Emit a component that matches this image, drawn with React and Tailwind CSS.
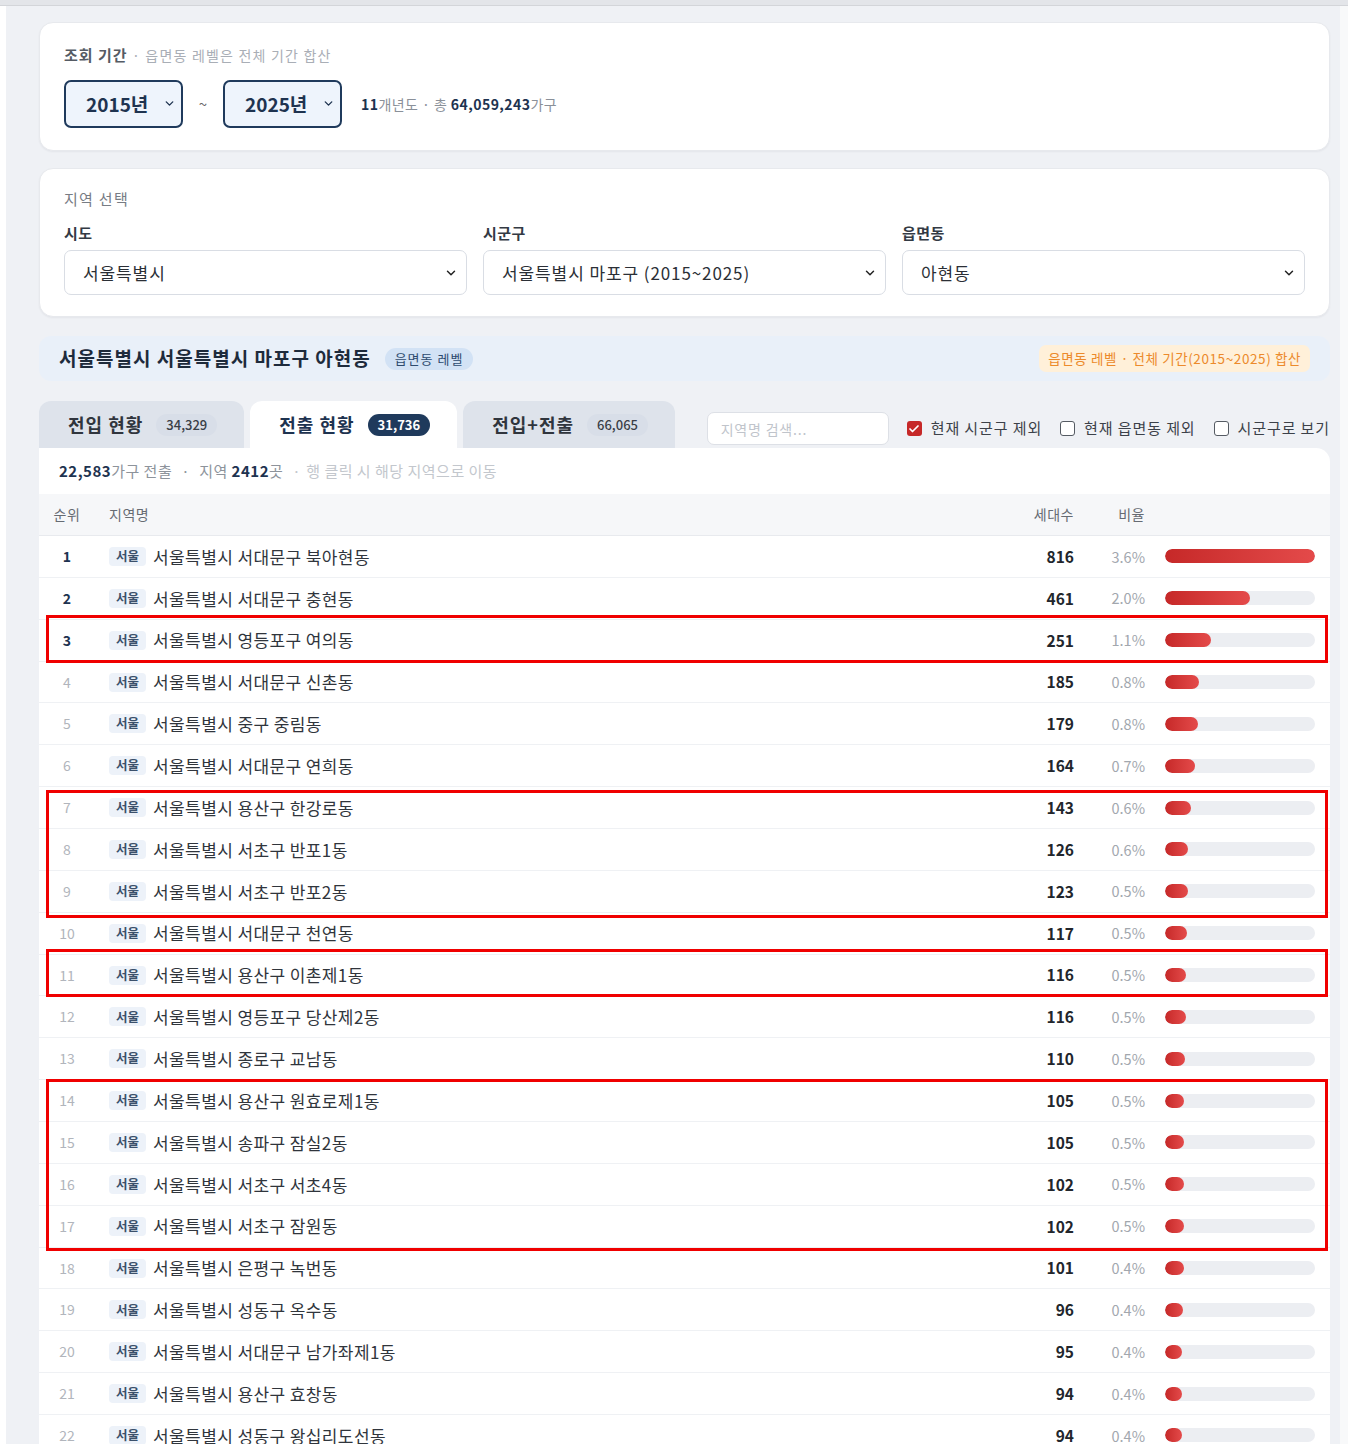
import React from 'react';
import { ChevronDown, Check } from 'lucide-react';

const rows = [
  { name: '서울특별시 서대문구 북아현동', count: 816, pct: '3.6%' },
  { name: '서울특별시 서대문구 충현동', count: 461, pct: '2.0%' },
  { name: '서울특별시 영등포구 여의동', count: 251, pct: '1.1%' },
  { name: '서울특별시 서대문구 신촌동', count: 185, pct: '0.8%' },
  { name: '서울특별시 중구 중림동', count: 179, pct: '0.8%' },
  { name: '서울특별시 서대문구 연희동', count: 164, pct: '0.7%' },
  { name: '서울특별시 용산구 한강로동', count: 143, pct: '0.6%' },
  { name: '서울특별시 서초구 반포1동', count: 126, pct: '0.6%' },
  { name: '서울특별시 서초구 반포2동', count: 123, pct: '0.5%' },
  { name: '서울특별시 서대문구 천연동', count: 117, pct: '0.5%' },
  { name: '서울특별시 용산구 이촌제1동', count: 116, pct: '0.5%' },
  { name: '서울특별시 영등포구 당산제2동', count: 116, pct: '0.5%' },
  { name: '서울특별시 종로구 교남동', count: 110, pct: '0.5%' },
  { name: '서울특별시 용산구 원효로제1동', count: 105, pct: '0.5%' },
  { name: '서울특별시 송파구 잠실2동', count: 105, pct: '0.5%' },
  { name: '서울특별시 서초구 서초4동', count: 102, pct: '0.5%' },
  { name: '서울특별시 서초구 잠원동', count: 102, pct: '0.5%' },
  { name: '서울특별시 은평구 녹번동', count: 101, pct: '0.4%' },
  { name: '서울특별시 성동구 옥수동', count: 96, pct: '0.4%' },
  { name: '서울특별시 서대문구 남가좌제1동', count: 95, pct: '0.4%' },
  { name: '서울특별시 용산구 효창동', count: 94, pct: '0.4%' },
  { name: '서울특별시 성동구 왕십리도선동', count: 94, pct: '0.4%' },
];

// highlighted groups (annotation boxes), in px relative to the rows list
const marks = [
  { top: 79, height: 48 },
  { top: 254, height: 128 },
  { top: 413, height: 48 },
  { top: 543, height: 172 },
];

function YearSelect({ value }) {
  return (
    <div className="relative">
      <select
        defaultValue={value}
        className="appearance-none w-[119px] h-[48px] border-2 border-[#1f3a5c] rounded-[7px] bg-[#eef4fc] pl-[20px] text-[19px] font-bold text-[#1e3350] focus:outline-none"
      >
        <option>{value}</option>
      </select>
      <ChevronDown className="absolute right-[7px] top-[17px] w-[13px] h-[13px] text-[#1e3350] pointer-events-none" strokeWidth={2.5} />
    </div>
  );
}

function RegionSelect({ label, value }) {
  return (
    <div>
      <div className="text-[15px] font-bold text-[#333a44] leading-[20px] tracking-[0.5px]">{label}</div>
      <div className="relative mt-[7px]">
        <select
          defaultValue={value}
          className="appearance-none w-full h-[45px] border border-[#d9dde4] rounded-[7px] bg-white pl-[18px] text-[17px] tracking-[0.9px] text-[#2b2f36] focus:outline-none"
        >
          <option>{value}</option>
        </select>
        <ChevronDown className="absolute right-[9px] top-[16px] w-[14px] h-[14px] text-[#222] pointer-events-none" strokeWidth={2.5} />
      </div>
    </div>
  );
}

function Tab({ label, count, active }) {
  return (
    <div
      className={`h-[47px] flex items-center gap-[13px] pl-[29px] pr-[27px] rounded-t-[12px] ${
        active ? 'bg-white' : 'bg-[#dee3eb]'
      }`}
    >
      <span className={`text-[18px] tracking-[1px] font-bold ${active ? 'text-[#1e3350]' : 'text-[#30353d]'}`}>{label}</span>
      <span
        className={`h-[22px] px-[10px] rounded-full flex items-center text-[13px] ${
          active ? 'bg-[#1f3a5c] text-white font-bold' : 'bg-[#d8dee8] text-[#3a3f47] font-medium'
        }`}
      >
        {count}
      </span>
    </div>
  );
}

function CheckItem({ label, checked }) {
  return (
    <label className="flex items-center gap-[9px] cursor-pointer">
      {checked ? (
        <span className="w-[15px] h-[15px] rounded-[3px] bg-[#c62828] flex items-center justify-center">
          <Check className="w-[12px] h-[12px] text-white" strokeWidth={3.5} />
        </span>
      ) : (
        <span className="w-[15px] h-[15px] rounded-[3px] border-[1.5px] border-[#555b63] bg-white" />
      )}
      <span className="text-[15px] tracking-[0.9px] text-[#3c4149]">{label}</span>
    </label>
  );
}

export default function App() {
  const max = rows[0].count;

  return (
    <div className="min-h-[1444px] bg-white font-['Noto_Sans_CJK_KR',sans-serif] text-[#333]">
      <div className="h-[6px] bg-[#e3e5e9] border-b border-[#d3d5d9]" />
      <div className="flex">
        <div className="w-[6px] shrink-0 bg-white" />
        <main className="flex-1 bg-[#eff1f5] pl-[33px] pr-[10px] pt-[16px] min-h-[1438px]">
          {/* Period */}
          <section className="bg-white rounded-[14px] border border-[#e7e9ed] shadow-[0_1px_2px_rgba(16,24,40,0.05)] px-[24px] pt-[21px] pb-[22px]">
            <div className="leading-[20px]">
              <span className="text-[15px] tracking-[1px] font-bold text-[#555b64]">조회 기간</span>
              <span className="text-[14px] tracking-[1.2px] text-[#a9aeb6]"> · 읍면동 레벨은 전체 기간 합산</span>
            </div>
            <div className="mt-[15px] flex items-center">
              <YearSelect value="2015년" />
              <span className="w-[40px] text-center text-[15px] text-[#666]">~</span>
              <YearSelect value="2025년" />
              <span className="ml-[19px] text-[14px] tracking-[0.45px] text-[#8a9099]">
                <b className="text-[#1e3350]">11</b>개년도 · 총 <b className="text-[#1e3350]">64,059,243</b>가구
              </span>
            </div>
          </section>

          {/* Region */}
          <section className="mt-[17px] bg-white rounded-[14px] border border-[#e7e9ed] shadow-[0_1px_2px_rgba(16,24,40,0.05)] px-[24px] pt-[20px] pb-[21px]">
            <div className="text-[15px] tracking-[1.3px] text-[#777c84] leading-[20px]">지역 선택</div>
            <div className="mt-[14px] grid grid-cols-3 gap-[16px]">
              <RegionSelect label="시도" value="서울특별시" />
              <RegionSelect label="시군구" value="서울특별시 마포구 (2015~2025)" />
              <RegionSelect label="읍면동" value="아현동" />
            </div>
          </section>

          {/* Title band */}
          <div className="mt-[19px] h-[45px] rounded-[12px] bg-[#e9f0f9] px-[20px] flex items-center justify-between">
            <div className="flex items-center gap-[14px]">
              <h2 className="text-[19px] tracking-[1px] font-bold text-[#1e2b3c]">서울특별시 서울특별시 마포구 아현동</h2>
              <span className="h-[22px] px-[10px] rounded-full bg-[#d2e2f5] text-[13px] tracking-[1px] text-[#2d4a6e] flex items-center">읍면동 레벨</span>
            </div>
            <span className="h-[27px] px-[9px] rounded-[7px] bg-[#fff0d9] text-[13.5px] tracking-[0.6px] text-[#ec8a2b] flex items-center">
              읍면동 레벨 · 전체 기간(2015~2025) 합산
            </span>
          </div>

          {/* Tabs + controls */}
          <div className="mt-[20px] flex items-end justify-between">
            <div className="flex items-end gap-[6px]">
              <Tab label="전입 현황" count="34,329" />
              <Tab label="전출 현황" count="31,736" active />
              <Tab label="전입+전출" count="66,065" />
            </div>
            <div className="flex items-center gap-[18px] pb-[3px]">
              <input
                type="text"
                placeholder="지역명 검색..."
                className="w-[182px] h-[33px] rounded-[7px] border border-[#dde0e6] bg-white px-[13px] text-[14px] tracking-[0.8px] placeholder:text-[#c0c4cb] focus:outline-none"
              />
              <CheckItem label="현재 시군구 제외" checked />
              <CheckItem label="현재 읍면동 제외" />
              <CheckItem label="시군구로 보기" />
            </div>
          </div>

          {/* Table */}
          <section className="bg-white rounded-tr-[14px]">
            <div className="h-[46px] flex items-center pl-[20px] text-[15px] tracking-[0.5px] text-[#8d939b]">
              <b className="text-[#1e3350]">22,583</b>가구 전출
              <span className="mx-[9px]">·</span>
              지역&nbsp;<b className="text-[#1e3350]">2412</b>곳
              <span className="ml-[9px] mr-[5px] text-[#c3c7cd]">·</span>
              <span className="text-[#c3c7cd]">행 클릭 시 해당 지역으로 이동</span>
            </div>
            <div className="h-[42px] flex items-center bg-[#f6f7f9] border-b border-[#e8eaee] pl-[14px] pr-[15px] text-[14px] tracking-[0.5px] text-[#666b73]">
              <span className="w-[28px] text-center">순위</span>
              <span className="ml-[28px] flex-1">지역명</span>
              <span className="w-[80px] text-right">세대수</span>
              <span className="w-[71px] text-right">비율</span>
              <span className="ml-[20px] w-[150px]" />
            </div>
            <div className="relative">
              {rows.map((r, i) => {
                const top = i < 3;
                return (
                  <div key={i} className="h-[41.86px] flex items-center border-b border-[#eff1f4] pl-[14px] pr-[15px]">
                    <span
                      className={`w-[28px] text-center text-[14px] ${
                        top ? 'font-bold text-[#1e3350]' : 'text-[#b1b5bc]'
                      }`}
                    >
                      {i + 1}
                    </span>
                    <div className="ml-[28px] flex-1 flex items-center gap-[7px]">
                      <span className="h-[19px] px-[7px] rounded-[4px] bg-[#edf2f9] text-[12.5px] font-bold text-[#3b506b] flex items-center">서울</span>
                      <span className="text-[17px] tracking-[0.4px] text-[#30353c]">{r.name}</span>
                    </div>
                    <span className="w-[80px] text-right text-[15.5px] font-bold text-[#22262c]">{r.count}</span>
                    <span className="w-[71px] text-right text-[14.5px] text-[#a2a7ae]">{r.pct}</span>
                    <div className="ml-[20px] w-[150px] h-[14px] rounded-full bg-[#eceef2] overflow-hidden">
                      <div
                        className="h-full rounded-full bg-linear-to-r from-[#c62828] to-[#e44a4a]"
                        style={{ width: `${(r.count / max) * 100}%` }}
                      />
                    </div>
                  </div>
                );
              })}
              {marks.map((m, i) => (
                <div
                  key={i}
                  className="absolute left-[7px] right-[2px] border-[3px] border-[#f00000] pointer-events-none"
                  style={{ top: m.top, height: m.height }}
                />
              ))}
            </div>
          </section>
        </main>
        <div className="w-[8px] shrink-0 bg-[#f8f9fa]" />
      </div>
    </div>
  );
}
